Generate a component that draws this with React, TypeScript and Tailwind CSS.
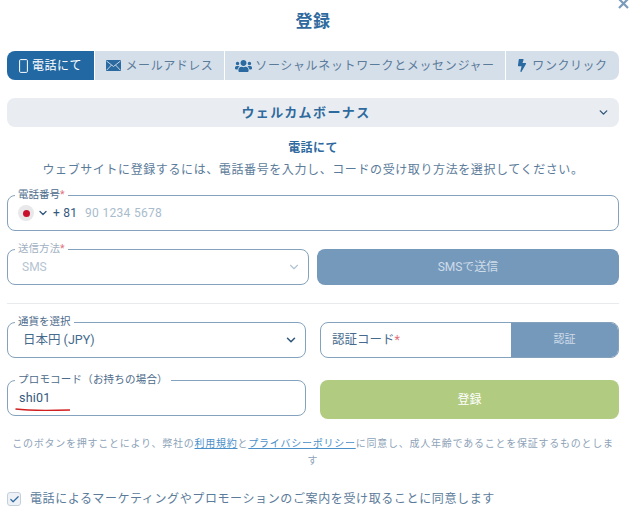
import { ChevronDown, Check } from "lucide-react";
import { FaUsers, FaBolt } from "react-icons/fa";

const font = "font-['Roboto','Noto_Sans_CJK_JP',sans-serif]";

function Phone() {
  return (
    <svg width="9" height="14" viewBox="0 0 9 14" fill="none" className="shrink-0">
      <rect x="0.6" y="0.6" width="7.8" height="12.8" rx="1" stroke="white" strokeWidth="1" />
    </svg>
  );
}

function Mail() {
  return (
    <svg width="15" height="11" viewBox="0 0 15 11" className="shrink-0">
      <rect width="15" height="11" rx="0.5" fill="#2a6aa0" />
      <path d="M0.5 1 L7.5 6.5 L14.5 1 M0.5 10.3 L5.5 5 M14.5 10.3 L9.5 5" stroke="#d5dfea" strokeWidth="0.9" fill="none" />
    </svg>
  );
}

function Req() {
  return <span className="text-[#e2717c]">*</span>;
}

function Legend({ children, muted }: { children: React.ReactNode; muted?: boolean }) {
  return (
    <span className={`absolute left-[7px] top-[-8px] bg-white px-[3px] text-[10.5px] leading-[14px] ${muted ? "text-[#9fb0c2]" : "text-[#4d6b8a]"}`}>
      {children}
    </span>
  );
}

export default function App() {
  return (
    <div className={`${font} relative h-[517px] w-[632px] overflow-hidden bg-white pl-[7px] pr-[13px]`}>
      <svg width="11" height="10" viewBox="0 0 11 10" className="absolute left-[618px] top-0">
        <path d="M1 -1 L10 8 M10 -1 L1 8" stroke="#7a9cba" strokeWidth="2.2" />
      </svg>

      <h1 className="pt-[10px] text-center text-[17px] leading-[23px] font-bold tracking-[0.5px] text-[#2f6a9e]">登録</h1>

      <div className="mt-[18px] flex h-[29px] gap-px text-[12px] tracking-[0.55px] text-[#5b7b9a]">
        <div className="flex w-[87px] items-center justify-center gap-[4px] rounded-l-[8px] bg-[#2269a4] text-white">
          <Phone />
          <span>電話にて</span>
        </div>
        <div className="flex w-[129px] items-center justify-center gap-[5px] bg-[#d5dfea]">
          <Mail />
          <span>メールアドレス</span>
        </div>
        <div className="flex w-[280px] items-center justify-center gap-[3px] bg-[#d5dfea] tracking-[0.65px]">
          <FaUsers className="h-[16px] w-[17px] shrink-0 text-[#2a6aa0]" />
          <span>ソーシャルネットワークとメッセンジャー</span>
        </div>
        <div className="flex flex-1 items-center justify-center gap-[5px] rounded-r-[8px] bg-[#d5dfea]">
          <FaBolt className="h-[13px] w-[10px] shrink-0 text-[#2a6aa0]" />
          <span>ワンクリック</span>
        </div>
      </div>

      <div className="relative mt-[18px] flex h-[29px] items-center justify-center rounded-[8px] bg-[#e9edf1] pr-[14px] text-[13px] font-bold tracking-[1.4px] text-[#2f6a9e]">
        ウェルカムボーナス
        <ChevronDown className="absolute right-[9px] top-[8px] h-[13px] w-[13px] text-[#33587c]" strokeWidth={2.6} />
      </div>

      <p className="mt-[13px] text-center text-[12px] leading-[16px] font-bold tracking-[0.4px] text-[#2f6a9e]">電話にて</p>
      <p className="mt-[6px] text-center text-[12px] leading-[16px] tracking-[0.6px] text-[#5b7b9a]">
        ウェブサイトに登録するには、電話番号を入力し、コードの受け取り方法を選択してください。
      </p>

      <div className="relative mt-[17px] flex h-[36px] items-center rounded-[8px] border border-[#84a2bd] pl-[10px]">
        <Legend>電話番号<Req /></Legend>
        <span className="flex h-[16px] w-[16px] items-center justify-center rounded-full bg-[#e8e8ea]">
          <span className="h-[7px] w-[7px] rounded-full bg-[#c8102e]" />
        </span>
        <ChevronDown className="ml-[3px] h-[12px] w-[12px] text-[#33587c]" strokeWidth={2.6} />
        <span className="ml-[4px] text-[12px] tracking-[0.2px] text-[#33587c]">+ 81</span>
        <span className="ml-[8px] text-[12px] tracking-[0.3px] text-[#a9bccd]">90 1234 5678</span>
      </div>

      <div className="mt-[18px] flex h-[36px] gap-[8px]">
        <div className="relative flex w-[302px] items-center justify-between rounded-[8px] border border-[#84a2bd] pr-[7px] pl-[14px] text-[12px] text-[#b5c3d1]">
          <Legend muted>送信方法<Req /></Legend>
          <span>SMS</span>
          <ChevronDown className="h-[14px] w-[14px] text-[#b5c3d1]" strokeWidth={2} />
        </div>
        <button className="flex-1 rounded-[8px] bg-[#7599bb] text-[12px] text-[#cfdcea]">SMSで送信</button>
      </div>

      <div className="mt-[18px] h-px bg-[#e8ebee]" />

      <div className="mt-[18px] flex gap-[14px]">
        <div className="flex w-[299px] flex-col gap-[22px]">
          <div className="relative flex h-[36px] items-center justify-between rounded-[8px] border border-[#84a2bd] pr-[7px] pl-[15px] text-[12.5px] text-[#456a8c]">
            <Legend>通貨を選択</Legend>
            <span>日本円 (JPY)</span>
            <ChevronDown className="h-[14px] w-[14px] text-[#33587c]" strokeWidth={2.6} />
          </div>
          <div className="relative flex h-[36px] items-center rounded-[8px] border border-[#84a2bd] pl-[11px] text-[12.5px] tracking-[0.2px] text-[#33587c]">
            <Legend>プロモコード（お持ちの場合）</Legend>
            <span>shi01</span>
            <svg width="56" height="4" viewBox="0 0 56 4" className="absolute left-[7px] top-[27px]">
              <path d="M0.5 1 C15 3 35 2.6 55 2" stroke="#d11f1f" strokeWidth="1.3" fill="none" />
            </svg>
          </div>
        </div>
        <div className="flex flex-1 flex-col gap-[22px]">
          <div className="flex h-[36px] overflow-hidden rounded-[8px] border border-[#84a2bd]">
            <span className="flex flex-1 items-center pl-[11px] text-[12.5px] text-[#456a8c]">認証コード<Req /></span>
            <span className="flex w-[107px] items-center justify-center bg-[#7599bb] text-[11px] text-[#cfdcea]">認証</span>
          </div>
          <button className="h-[39px] rounded-[8px] bg-[#b1cb80] text-[12px] text-white">登録</button>
        </div>
      </div>

      <p className="mt-[16px] text-center text-[10px] leading-[17px] tracking-[0.76px] text-[#8ea3b8]">
        このボタンを押すことにより、弊社の<span className="text-[#4b90c8] underline">利用規約</span>と<span className="text-[#4b90c8] underline">プライバシーポリシー</span>に同意し、成人年齢であることを保証するものとします
      </p>

      <label className="mt-[21px] flex items-center gap-[9px] text-[12px] tracking-[0.62px] text-[#5b7b9a]">
        <span className="flex h-[14px] w-[14px] items-center justify-center rounded-[3px] border border-[#c3d0dc] bg-[#eef2f6]">
          <Check className="h-[11px] w-[11px] text-[#2f6a9e]" strokeWidth={2.6} />
        </span>
        電話によるマーケティングやプロモーションのご案内を受け取ることに同意します
      </label>
    </div>
  );
}
